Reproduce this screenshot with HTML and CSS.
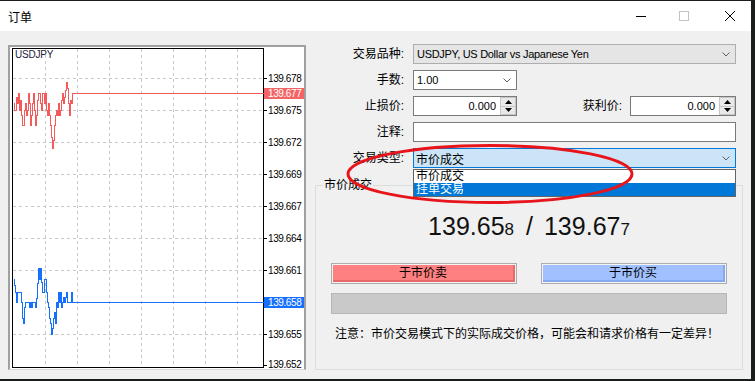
FILE: index.html
```html
<!DOCTYPE html>
<html>
<head>
<meta charset="utf-8">
<link rel="stylesheet" href="styles.css">
</head>
<body>
<div class="window">
  <div class="titlebar">
    <span class="title">订单</span>
    <div class="controls">
      <svg class="ctl-min" width="10" height="10" viewBox="0 0 10 10"><path d="M0 5.5H10" stroke="#000" stroke-width="1"/></svg>
      <svg class="ctl-max" width="10" height="10" viewBox="0 0 10 10"><rect x="0.5" y="0.5" width="9" height="9" fill="none" stroke="#c4c4c4"/></svg>
      <svg class="ctl-close" width="10" height="10" viewBox="0 0 10 10"><path d="M0 0L10 10M10 0L0 10" stroke="#000" stroke-width="1"/></svg>
    </div>
  </div>
  <div class="content">
    <div class="chart-panel">
      <svg class="chart" viewBox="10 47 294 322" width="294" height="322">
        <g shape-rendering="crispEdges" stroke="#c8c8c8" stroke-width="1" stroke-dasharray="3 3" fill="none">
          <path d="M45.5 49V367M77.5 49V367M109.5 49V367M141.5 49V367M173.5 49V367M205.5 49V367M237.5 49V367"/>
          <path d="M13 78.5H263M13 110.5H263M13 142.5H263M13 174.5H263M13 206.5H263M13 238.5H263M13 270.5H263M13 334.5H263"/>
        </g>
        <rect x="12.5" y="48.5" width="251" height="319" fill="none" stroke="#000" shape-rendering="crispEdges"/>
        <g stroke="#000" shape-rendering="crispEdges">
          <path d="M264 78.5H267M264 110.5H267M264 142.5H267M264 174.5H267M264 206.5H267M264 238.5H267M264 270.5H267M264 334.5H267M264 365.5H267"/>
        </g>
        <text class="sym" x="15" y="58">USDJPY</text>
        <g transform="translate(0.5 0.5)" fill="none" stroke-width="1" shape-rendering="crispEdges">
          <path stroke="#f45a5a" d="M13 103H14V110H16V97H17V103H18V93H19V110H20V100H21V115H22V125H24V110H25V103H26V115H27V110H28V93H29V103H30V125H31V115H32V103H33V93H34V110H35V125H36V115H37V100H38V93H40V103H41V110H42V93H44V103H45V93H46V110H47V115H48V103H49V115H50V125H51V137H52V148H53V140H54V125H55V115H56V110H57V115H58V103H59V115H60V110H61V100H62V93H63V103H64V97H65V90H66V82H67V88H68V103H69V115H70V100H71V103H72V93H263"/>
          <path stroke="#1670ff" d="M13 279H14V285H15V292H16V302H17V292H21V302H22V318H23V323H24V307H25V302H29V307H30V302H31V307H32V302H35V307H36V298H37V283H38V268H39V279H40V268H41V282H42V292H44V279H46V292H47V302H48V307H49V318H50V323H51V334H52V328H53V318H54V312H55V323H56V302H57V307H58V292H59V302H60V292H61V307H62V302H63V297H64V302H65V297H66V292H67V302H71V292H72V302H263"/>
        </g>
        <g class="axis">
          <text x="268" y="82">139.678</text>
          <text x="268" y="114">139.675</text>
          <text x="268" y="146">139.672</text>
          <text x="268" y="178">139.669</text>
          <text x="268" y="210">139.667</text>
          <text x="268" y="242">139.664</text>
          <text x="268" y="274">139.661</text>
          <text x="268" y="338">139.655</text>
          <text x="268" y="368">139.652</text>
        </g>
        <rect x="264" y="88" width="41" height="11" fill="#f46464" shape-rendering="crispEdges"/>
        <text class="axis-hi" x="268" y="97">139.677</text>
        <rect x="264" y="297" width="41" height="11" fill="#1670ff" shape-rendering="crispEdges"/>
        <text class="axis-hi" x="268" y="306">139.658</text>
      </svg>
    </div>
    <div class="form">
      <div class="rows">
        <span class="lbl">交易品种:</span>
        <div class="combo combo-gray">
          <span class="val latin symval">USDJPY, US Dollar vs Japanese Yen</span>
          <svg class="chev" width="8" height="5" viewBox="0 0 8 5"><path d="M0.5 0.5L4 4L7.5 0.5" fill="none" stroke="#606060"/></svg>
        </div>

        <span class="lbl">手数:</span>
        <div class="combo short">
          <span class="val latin">1.00</span>
          <svg class="chev" width="8" height="5" viewBox="0 0 8 5"><path d="M0.5 0.5L4 4L7.5 0.5" fill="none" stroke="#606060"/></svg>
        </div>

        <span class="lbl">止损价:</span>
        <div class="pair">
          <div class="spin short">
            <span class="num latin">0.000</span>
            <span class="arrows">
              <span class="arr"><svg width="7" height="4" viewBox="0 0 7 4"><path d="M0 4L3.5 0L7 4Z" fill="#000"/></svg></span>
              <span class="arr"><svg width="7" height="4" viewBox="0 0 7 4"><path d="M0 0L3.5 4L7 0Z" fill="#000"/></svg></span>
            </span>
          </div>
          <span class="lbl2">获利价:</span>
          <div class="spin tp">
            <span class="num latin">0.000</span>
            <span class="arrows">
              <span class="arr"><svg width="7" height="4" viewBox="0 0 7 4"><path d="M0 4L3.5 0L7 4Z" fill="#000"/></svg></span>
              <span class="arr"><svg width="7" height="4" viewBox="0 0 7 4"><path d="M0 0L3.5 4L7 0Z" fill="#000"/></svg></span>
            </span>
          </div>
        </div>

        <span class="lbl">注释:</span>
        <div class="textbox"></div>

        <span class="lbl">交易类型:</span>
        <div class="combo combo-sel">
          <span class="val">市价成交</span>
          <svg class="chev" width="8" height="5" viewBox="0 0 8 5"><path d="M0.5 0.5L4 4L7.5 0.5" fill="none" stroke="#606060"/></svg>
        </div>
      </div>

      <fieldset class="group">
        <legend>市价成交</legend>
        <div class="price"><span>139.65</span><span class="small">8</span><span class="slash">/</span><span>139.67</span><span class="small">7</span></div>
        <div class="btns">
          <div class="btn"><div class="btn-in sell">于市价卖</div></div>
          <div class="btn"><div class="btn-in buy">于市价买</div></div>
        </div>
        <div class="bar"></div>
        <div class="notice">注意：市价交易模式下的实际成交价格，可能会和请求价格有一定差异！</div>
      </fieldset>

      <div class="dropdown">
        <div class="item">市价成交</div>
        <div class="item active">挂单交易</div>
      </div>
    </div>
  </div>
  <svg class="annot" width="751" height="378" viewBox="0 0 751 378">
    <ellipse cx="490" cy="173" rx="142" ry="28.5" fill="none" stroke="#e8141c" stroke-width="3"/>
  </svg>
</div>
</body>
</html>
```

FILE: styles.css
```css
* { box-sizing: border-box; }
html, body { margin: 0; padding: 0; }
body {
  background: #1b1d1c;
  width: 755px;
  height: 381px;
  overflow: hidden;
  font-family: "Liberation Sans", "Noto Sans CJK SC", sans-serif;
  font-size: 12px;
  color: #000;
}
.window {
  position: relative;
  margin-top: 1px;
  width: 751px;
  height: 378px;
  background: #f0f0f0;
  display: flex;
  flex-direction: column;
}
.titlebar {
  height: 30px;
  flex: none;
  background: #fff;
  display: flex;
  align-items: center;
  padding-left: 8px;
}
.title { flex: 1; font-size: 12px; }
.controls {
  display: flex;
  align-items: center;
  padding-right: 16px;
}
.controls svg { display: block; }
.ctl-min { margin-right: 33px; }
.ctl-max { margin-right: 36px; }

.content {
  flex: 1;
  display: flex;
  gap: 9px;
  padding: 13px 8px 9px 8px;
}
.chart-panel {
  width: 298px;
  height: 325px;
  margin-top: 1px;
  background: #fff;
  border-style: solid;
  border-color: #a0a0a0 #a0a0a0 #dadada #a0a0a0;
  border-width: 2px 2px 1px 2px;
}
.chart { display: block; }
.chart text { font-family: "Liberation Sans", sans-serif; }
.sym { font-size: 10px; fill: #1c1c3a; letter-spacing: -0.2px; }
.axis text { font-size: 10px; fill: #000; letter-spacing: -0.4px; }
.axis-hi { font-size: 10px; fill: #fff; letter-spacing: -0.4px; }

.form {
  width: 428px;
  display: flex;
  flex-direction: column;
  position: relative;
}
.rows {
  display: grid;
  grid-template-columns: 89px 323px;
  grid-auto-rows: 20px;
  column-gap: 9px;
  row-gap: 6px;
}
.lbl { text-align: right; line-height: 20px; white-space: nowrap; }
.latin { font-size: 11px; }
.symval { letter-spacing: -0.3px; }
.combo {
  display: flex;
  align-items: center;
  height: 20px;
  border: 1px solid #7a7a7a;
  background: #fff;
  padding: 0 5px 0 3px;
}
.combo .val { flex: 1; white-space: nowrap; }
.chev { display: block; }
.combo-gray { background: #e5e5e5; border-color: #adadad; }
.combo-sel { background: #cce4f7; border-color: #0078d7; padding-left: 2px; }
.short { width: 104px; }
.pair { display: flex; align-items: center; }
.lbl2 { flex: 1; text-align: right; padding-right: 8px; line-height: 20px; }
.spin {
  display: flex;
  height: 20px;
  border: 1px solid #7a7a7a;
  background: #fff;
}
.spin.tp { width: 106px; }
.spin .num { flex: 1; text-align: right; padding-right: 4px; line-height: 18px; }
.arrows { width: 16px; display: flex; flex-direction: column; }
.arr {
  flex: 1;
  display: flex;
  align-items: center;
  justify-content: center;
  background: #e9e9e9;
  border: 1px solid #c6c6c6;
}
.arr + .arr { border-top: none; }
.arr svg { display: block; }
.textbox { border: 1px solid #7a7a7a; background: #fff; }

.group {
  margin: 10px 0 0;
  padding: 0 15px;
  border: 1px solid #dcdcdc;
  flex: 1;
  min-width: 0;
}
.group legend {
  padding: 0 1px;
  margin-left: -8px;
  line-height: 14px;
}
.price {
  margin-top: 18px;
  text-align: center;
  font-size: 25px;
  line-height: 32px;
  color: #111;
  white-space: nowrap;
}
.price .small { font-size: 17px; }
.price .slash { margin: 0 11px 0 12px; }
.btns {
  margin-top: 17px;
  display: flex;
  justify-content: space-between;
}
.btn {
  width: 186px;
  height: 21px;
  border: 1px solid #adadad;
  padding: 1px;
  background: #f4f4f4;
}
.btn-in {
  height: 100%;
  text-align: center;
  line-height: 17px;
}
.sell { background: #ff8080; border-right: 2px solid #e86a6a; border-bottom: 2px solid #e86a6a; }
.buy { background: #a0c0ff; border-right: 2px solid #86a8ee; border-bottom: 2px solid #86a8ee; }
.bar {
  margin-top: 9px;
  height: 21px;
  background: #c9c9c9;
  border: 1px solid #b6b6b6;
}
.notice {
  margin-top: 12px;
  padding-left: 4px;
  line-height: 16px;
  white-space: nowrap;
}
.dropdown {
  position: absolute;
  left: 98px;
  top: 125px;
  width: 323px;
  background: #fff;
  border: 1px solid #646464;
}
.item { height: 13px; line-height: 13px; padding-left: 2px; }
.item.active { background: #0078d7; color: #fff; }
.annot {
  position: absolute;
  left: 0;
  top: 0;
  pointer-events: none;
}
```
